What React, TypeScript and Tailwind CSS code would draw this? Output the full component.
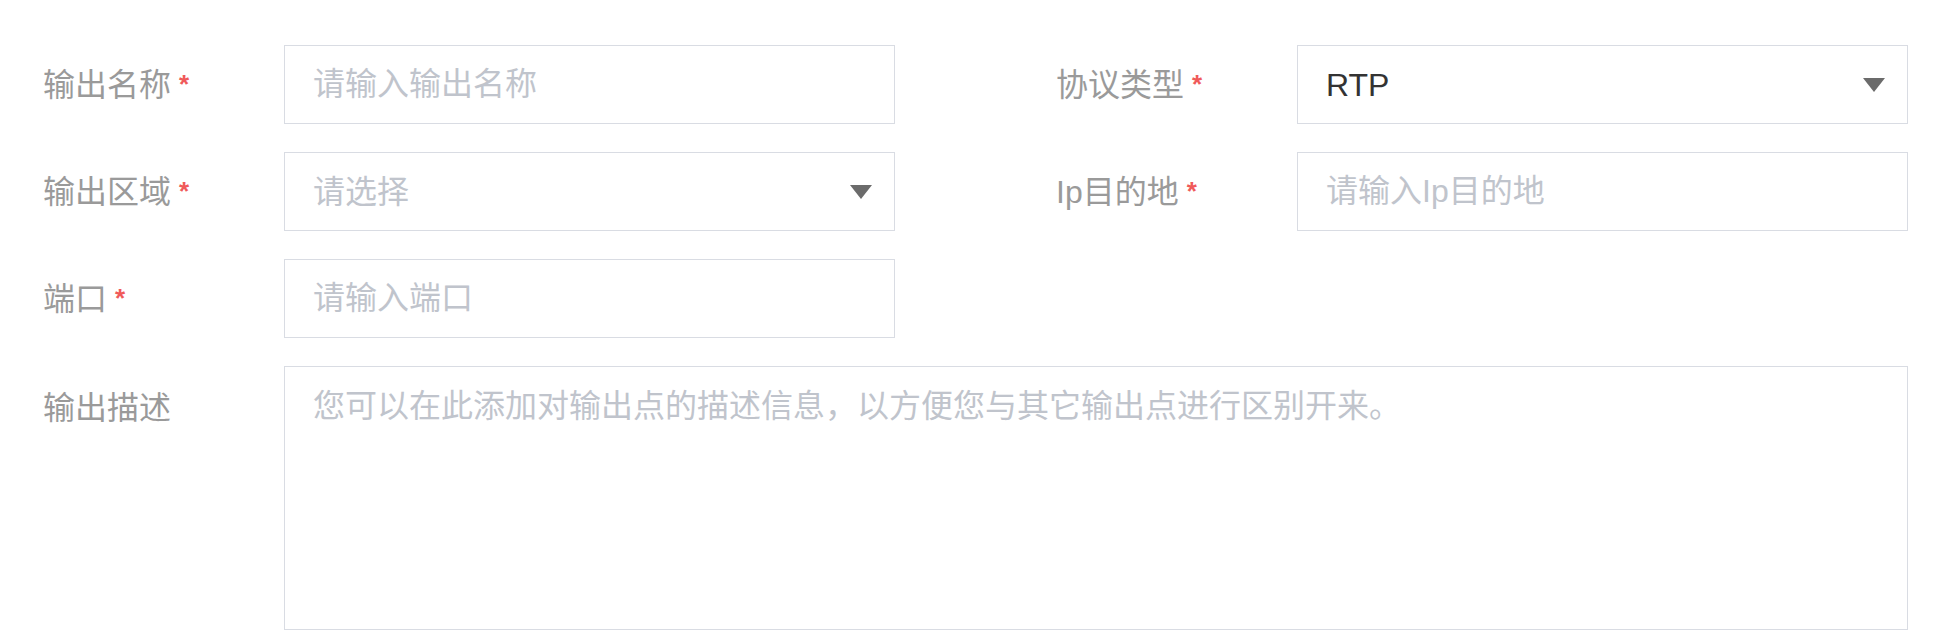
import React from "react";

const font = { fontFamily: '"Liberation Sans", "Noto Sans CJK SC", sans-serif' };

function Label({ text, required }: { text: string; required?: boolean }) {
  return (
    <div className="flex w-[241px] shrink-0 items-center text-[32px] leading-none text-[#9a9a9a]">
      <span>{text}</span>
      {required && (
        <span className="ml-[8px] mt-[-2px] text-[26px] font-bold leading-none text-[#f05a5a]">*</span>
      )}
    </div>
  );
}

function TextInput({ placeholder }: { placeholder: string }) {
  return (
    <input
      className="h-[79px] min-w-0 flex-1 border border-[#d9dce3] bg-white px-[28px] text-[32px] text-[#333] outline-none placeholder:text-[#c0c4cc]"
      placeholder={placeholder}
    />
  );
}

function Select({ value, placeholder }: { value?: string; placeholder: string }) {
  return (
    <div className="flex h-[79px] min-w-0 flex-1 items-center justify-between border border-[#d9dce3] bg-white pl-[28px] pr-[22px]">
      <span className={value ? "text-[32px] text-[#333333]" : "text-[32px] text-[#c0c4cc]"}>
        {value ?? placeholder}
      </span>
      <svg width="22" height="14" viewBox="0 0 22 14">
        <path d="M0 0 H22 L11 14 Z" fill="#6b6b6b" />
      </svg>
    </div>
  );
}

export default function App() {
  return (
    <div className="min-h-screen bg-white pl-[43px] pr-[44px] pt-[45px]" style={font}>
      <div className="grid grid-cols-2 gap-x-[161px] gap-y-[28px]">
        <div className="flex items-center">
          <Label text="输出名称" required />
          <TextInput placeholder="请输入输出名称" />
        </div>
        <div className="flex items-center">
          <Label text="协议类型" required />
          <Select value="RTP" placeholder="请选择" />
        </div>
        <div className="flex items-center">
          <Label text="输出区域" required />
          <Select placeholder="请选择" />
        </div>
        <div className="flex items-center">
          <Label text="Ip目的地" required />
          <TextInput placeholder="请输入Ip目的地" />
        </div>
        <div className="flex items-center">
          <Label text="端口" required />
          <TextInput placeholder="请输入端口" />
        </div>
        <div />
        <div className="col-span-2 flex items-start">
          <div className="flex w-[241px] shrink-0 pt-[26px] text-[32px] leading-none text-[#9a9a9a]">
            输出描述
          </div>
          <textarea
            className="h-[264px] flex-1 resize-none border border-[#d9dce3] bg-white px-[28px] py-[15px] text-[32px] leading-[1.5] text-[#333] outline-none placeholder:text-[#c0c4cc]"
            placeholder="您可以在此添加对输出点的描述信息，以方便您与其它输出点进行区别开来。"
          />
        </div>
      </div>
    </div>
  );
}
